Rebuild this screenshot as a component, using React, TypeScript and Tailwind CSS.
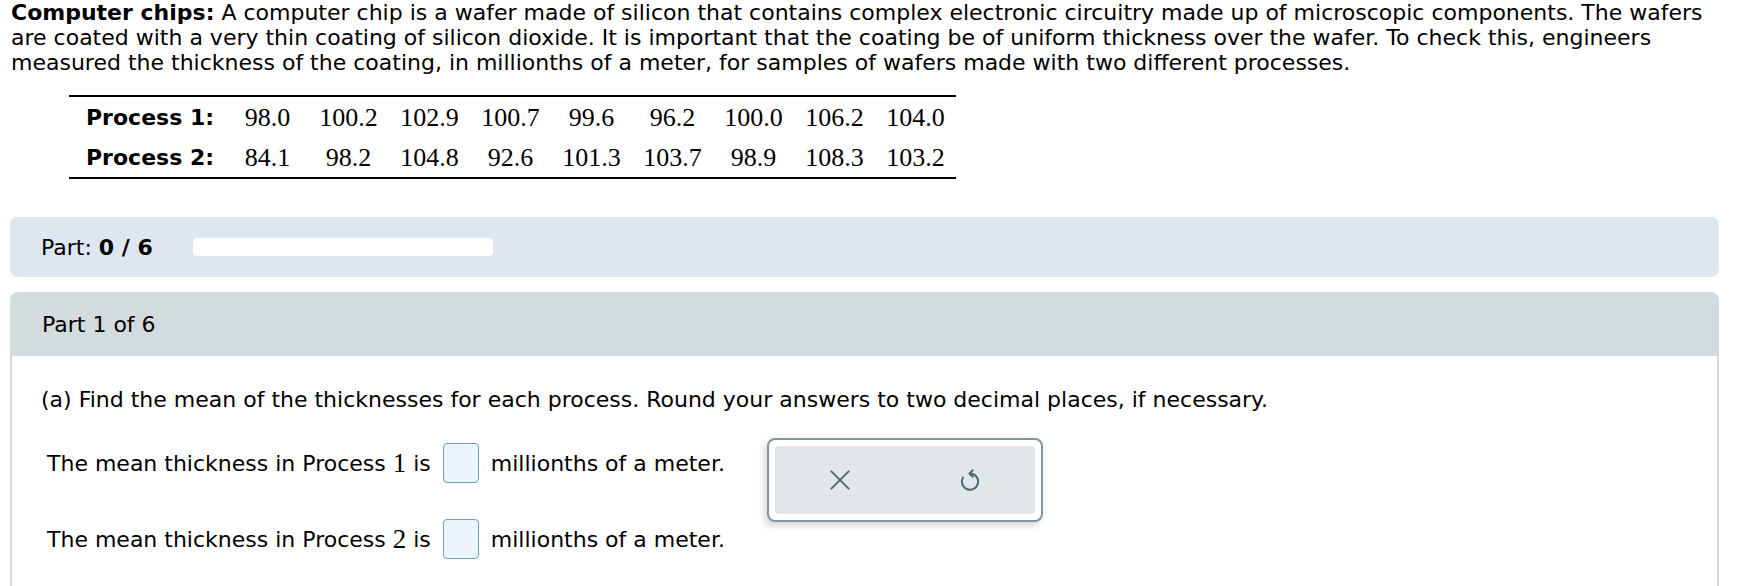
import React from 'react';

const row1 = ['98.0', '100.2', '102.9', '100.7', '99.6', '96.2', '100.0', '106.2', '104.0'];
const row2 = ['84.1', '98.2', '104.8', '92.6', '101.3', '103.7', '98.9', '108.3', '103.2'];

const serif = { fontFamily: '"Liberation Serif", "Times New Roman", serif' };

const DataRow = ({ label, values }: { label: string; values: string[] }) => (
  <div className="flex h-[40px] items-center">
    <div className="w-[158px] whitespace-nowrap pl-[17px] font-bold">{label}</div>
    {values.map((v, i) => (
      <div key={i} className="w-[81px] text-center text-[26px]" style={serif}>
        {v}
      </div>
    ))}
  </div>
);

const AnswerBox = () => (
  <span className="mx-[12px] inline-block h-[40px] w-[36px] rounded-[4px] border-[1.5px] border-[#72a0b1] bg-[#eaf4f9]" />
);

const Sentence = ({ n }: { n: number }) => (
  <div className="flex h-[40px] items-center whitespace-nowrap">
    <span>The mean thickness in Process</span>
    <span className="ml-[7px] text-[27px]" style={serif}>
      {n}
    </span>
    <span className="ml-[7px]">is</span>
    <AnswerBox />
    <span>millionths of a meter.</span>
  </div>
);

export default function App() {
  return (
    <div
      className="min-h-[586px] bg-white text-[22px] leading-[25px] text-black"
      style={{ fontFamily: '"DejaVu Sans", Verdana, sans-serif' }}
    >
      <p className="whitespace-nowrap px-[11px]">
        <b>Computer chips:</b> A computer chip is a wafer made of silicon that contains complex electronic circuitry
        made up of microscopic components. The wafers
        <br />
        are coated with a very thin coating of silicon dioxide. It is important that the coating be of uniform
        thickness over the wafer. To check this, engineers
        <br />
        measured the thickness of the coating, in millionths of a meter, for samples of wafers made with two different
        processes.
      </p>

      <div className="ml-[69px] mt-[20px] w-[887px] border-y-2 border-black">
        <DataRow label="Process 1:" values={row1} />
        <DataRow label="Process 2:" values={row2} />
      </div>

      <div className="mx-[10px] mt-[38px] flex h-[60px] w-[1709px] items-center rounded-[8px] bg-[#dee7f0] pl-[31px]">
        <span className="whitespace-nowrap">
          Part: <b>0 / 6</b>
        </span>
        <div className="ml-[40px] h-[18px] w-[300px] rounded-[4px] bg-white" />
      </div>

      <div className="mx-[10px] mt-[15px] w-[1709px]">
        <div className="flex h-[64px] items-center rounded-t-[8px] bg-[#d3dbdf] pl-[32px]">Part 1 of 6</div>
        <div className="border-x-2 border-[#d3dbdf] bg-white pb-[40px] pl-[29px] pt-[31px]">
          <p className="whitespace-nowrap">
            (a) Find the mean of the thicknesses for each process. Round your answers to two decimal places, if
            necessary.
          </p>
          <div className="mt-[26px] flex items-start">
            <div className="flex w-[726px] flex-col gap-[36px] pl-[6px] pt-[5px]">
              <Sentence n={1} />
              <Sentence n={2} />
            </div>
            <div className="h-[84px] w-[276px] rounded-[8px] border-2 border-[#8198a2] bg-white p-[6px] shadow-[-3px_4px_6px_rgba(0,0,0,0.15)]">
              <div className="flex h-full rounded-[4px] bg-[#e1e6e9]">
                <button className="flex flex-1 items-center justify-center text-[#4b6a77]">
                  <svg width="26" height="26" viewBox="0 0 24 24" fill="none" stroke="currentColor" strokeWidth="1.8" strokeLinecap="round">
                    <path d="M4 4 L20 20 M20 4 L4 20" />
                  </svg>
                </button>
                <button className="flex flex-1 items-center justify-center text-[#4b6a77]">
                  <svg width="26" height="26" viewBox="0 0 24 24" fill="none" stroke="currentColor" strokeWidth="1.8" strokeLinecap="round" strokeLinejoin="round">
                    <path d="M12 6 A7.5 7.5 0 1 1 5.5 9.75" />
                    <path d="M14.5 3 L11.5 6 L14.5 9" />
                  </svg>
                </button>
              </div>
            </div>
          </div>
        </div>
      </div>
    </div>
  );
}
